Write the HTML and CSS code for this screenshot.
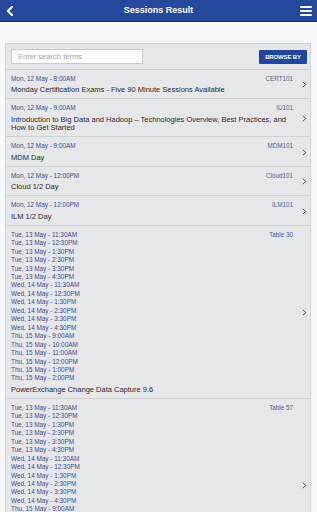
FILE: index.html
```html
<!DOCTYPE html>
<html lang="en">
<head>
<meta charset="utf-8">
<title>Sessions Result</title>
<link rel="stylesheet" href="styles.css">
</head>
<body>
<header class="topbar">
  <button class="icon-btn back" aria-label="Back">
    <svg width="8" height="10" viewBox="0 0 8 10"><polyline points="6,1 1.8,5 6,9" fill="none" stroke="#fff" stroke-width="2" stroke-linecap="round" stroke-linejoin="round"/></svg>
  </button>
  <h1 class="topbar-title">Sessions Result</h1>
  <button class="icon-btn menu" aria-label="Menu">
    <svg width="12" height="10" viewBox="0 0 12 10"><rect x="0" y="0" width="12" height="2" rx="1" fill="#fff"/><rect x="0" y="4" width="12" height="2" rx="1" fill="#fff"/><rect x="0" y="8" width="12" height="2" rx="1" fill="#fff"/></svg>
  </button>
</header>
<main class="page">
  <section class="panel">
    <div class="searchbar">
      <input class="search" type="text" placeholder="Enter search terms">
      <button class="browse">BROWSE BY</button>
    </div>
    <ul class="sessions">
      <li class="session">
        <div class="info">
          <div class="meta"><div class="dates"><div>Mon, 12 May - 8:00AM</div></div><span class="code">CERT101</span></div>
          <div class="title">Monday Certification Exams - Five 90 Minute Sessions Available</div>
        </div>
        <svg class="chev" width="5" height="7" viewBox="0 0 5 7"><polyline points="0.8,0.8 3.8,3.5 0.8,6.2" fill="none" stroke="#555" stroke-width="1"/></svg>
      </li>
      <li class="session">
        <div class="info">
          <div class="meta"><div class="dates"><div>Mon, 12 May - 9:00AM</div></div><span class="code">IU101</span></div>
          <div class="title">Introduction to Big Data and Hadoop – Technologies Overview, Best Practices, and How to Get Started</div>
        </div>
        <svg class="chev" width="5" height="7" viewBox="0 0 5 7"><polyline points="0.8,0.8 3.8,3.5 0.8,6.2" fill="none" stroke="#555" stroke-width="1"/></svg>
      </li>
      <li class="session">
        <div class="info">
          <div class="meta"><div class="dates"><div>Mon, 12 May - 9:00AM</div></div><span class="code">MDM101</span></div>
          <div class="title">MDM Day</div>
        </div>
        <svg class="chev" width="5" height="7" viewBox="0 0 5 7"><polyline points="0.8,0.8 3.8,3.5 0.8,6.2" fill="none" stroke="#555" stroke-width="1"/></svg>
      </li>
      <li class="session">
        <div class="info">
          <div class="meta"><div class="dates"><div>Mon, 12 May - 12:00PM</div></div><span class="code">Cloud101</span></div>
          <div class="title">Cloud 1/2 Day</div>
        </div>
        <svg class="chev" width="5" height="7" viewBox="0 0 5 7"><polyline points="0.8,0.8 3.8,3.5 0.8,6.2" fill="none" stroke="#555" stroke-width="1"/></svg>
      </li>
      <li class="session">
        <div class="info">
          <div class="meta"><div class="dates"><div>Mon, 12 May - 12:00PM</div></div><span class="code">ILM101</span></div>
          <div class="title">ILM 1/2 Day</div>
        </div>
        <svg class="chev" width="5" height="7" viewBox="0 0 5 7"><polyline points="0.8,0.8 3.8,3.5 0.8,6.2" fill="none" stroke="#555" stroke-width="1"/></svg>
      </li>
      <li class="session">
        <div class="info">
          <div class="meta">
            <div class="dates">
              <div>Tue, 13 May - 11:30AM</div>
              <div>Tue, 13 May - 12:30PM</div>
              <div>Tue, 13 May - 1:30PM</div>
              <div>Tue, 13 May - 2:30PM</div>
              <div>Tue, 13 May - 3:30PM</div>
              <div>Tue, 13 May - 4:30PM</div>
              <div>Wed, 14 May - 11:30AM</div>
              <div>Wed, 14 May - 12:30PM</div>
              <div>Wed, 14 May - 1:30PM</div>
              <div>Wed, 14 May - 2:30PM</div>
              <div>Wed, 14 May - 3:30PM</div>
              <div>Wed, 14 May - 4:30PM</div>
              <div>Thu, 15 May - 9:00AM</div>
              <div>Thu, 15 May - 10:00AM</div>
              <div>Thu, 15 May - 11:00AM</div>
              <div>Thu, 15 May - 12:00PM</div>
              <div>Thu, 15 May - 1:00PM</div>
              <div>Thu, 15 May - 2:00PM</div>
            </div>
            <span class="code table">Table 30</span>
          </div>
          <div class="title">PowerExchange Change Data Capture 9.6</div>
        </div>
        <svg class="chev" width="5" height="7" viewBox="0 0 5 7"><polyline points="0.8,0.8 3.8,3.5 0.8,6.2" fill="none" stroke="#555" stroke-width="1"/></svg>
      </li>
      <li class="session">
        <div class="info">
          <div class="meta">
            <div class="dates">
              <div>Tue, 13 May - 11:30AM</div>
              <div>Tue, 13 May - 12:30PM</div>
              <div>Tue, 13 May - 1:30PM</div>
              <div>Tue, 13 May - 2:30PM</div>
              <div>Tue, 13 May - 3:30PM</div>
              <div>Tue, 13 May - 4:30PM</div>
              <div>Wed, 14 May - 11:30AM</div>
              <div>Wed, 14 May - 12:30PM</div>
              <div>Wed, 14 May - 1:30PM</div>
              <div>Wed, 14 May - 2:30PM</div>
              <div>Wed, 14 May - 3:30PM</div>
              <div>Wed, 14 May - 4:30PM</div>
              <div>Thu, 15 May - 9:00AM</div>
              <div>Thu, 15 May - 10:00AM</div>
              <div>Thu, 15 May - 11:00AM</div>
              <div>Thu, 15 May - 12:00PM</div>
              <div>Thu, 15 May - 1:00PM</div>
              <div>Thu, 15 May - 2:00PM</div>
            </div>
            <span class="code table">Table 57</span>
          </div>
          <div class="title">PowerCenter Data Validation Option</div>
        </div>
        <svg class="chev" width="5" height="7" viewBox="0 0 5 7"><polyline points="0.8,0.8 3.8,3.5 0.8,6.2" fill="none" stroke="#555" stroke-width="1"/></svg>
      </li>
    </ul>
  </section>
</main>
</body>
</html>
```
FILE: styles.css
```css
* { box-sizing: border-box; }

html, body {
  margin: 0;
  padding: 0;
}

body {
  background: #f7f8fa;
  font-family: "Liberation Sans", Arial, Helvetica, sans-serif;
  color: #2b2b2b;
  overflow: hidden;
}

.topbar {
  display: grid;
  grid-template-columns: 1fr auto 1fr;
  align-items: center;
  height: 22px;
  background: #26489c;
  border-bottom: 1px solid #1a3478;
}

.icon-btn {
  background: none;
  border: 0;
  padding: 0;
  margin: 0;
  display: flex;
  line-height: 0;
}

.back {
  justify-self: start;
  margin-left: 6px;
}

.menu {
  justify-self: end;
  margin-right: 5px;
}

.topbar-title {
  margin: 0;
  font-size: 9px;
  font-weight: bold;
  color: #fff;
  line-height: 21px;
}

.page {
  padding: 21px 6px 0 5px;
}

.panel {
  background: #e6e7e9;
  border: 1px solid #d3d4d6;
  border-bottom: 0;
}

.searchbar {
  display: flex;
  justify-content: space-between;
  align-items: center;
  padding: 5px 3px 5px 5px;
  border-bottom: 1px solid #d0d1d3;
}

.search {
  width: 132px;
  height: 15px;
  margin: 0;
  padding: 0 0 0 6px;
  border: 1px solid #cbcbcb;
  background: #fff;
  font-family: inherit;
  font-size: 7.6px;
  color: #333;
  outline: none;
  border-radius: 0;
}

.search::placeholder {
  color: #a3a3a3;
}

.browse {
  width: 48px;
  height: 14px;
  margin: 0;
  padding: 0;
  border: 0;
  background: #22469b;
  color: #fff;
  font-family: inherit;
  font-size: 6px;
  font-weight: bold;
  letter-spacing: -0.15px;
  border-radius: 1px;
}

.sessions {
  list-style: none;
  margin: 0;
  padding: 0;
}

.session {
  display: flex;
  align-items: center;
  padding: 5px 3px 3.5px 5px;
  border-bottom: 1px solid #d0d1d3;
}

.info {
  flex: 1;
  min-width: 0;
}

.meta {
  display: flex;
  justify-content: space-between;
  align-items: flex-start;
  padding-right: 2px;
}

.dates {
  font-size: 6.4px;
  line-height: 8.45px;
  color: #3c4d8e;
}

.code {
  font-size: 6.3px;
  line-height: 8.45px;
  color: #56628f;
}

.code.table {
  color: #4558a8;
}

.title {
  margin-top: 3px;
  font-size: 7.5px;
  line-height: 8.5px;
  color: #2b2b2b;
}

.chev {
  flex: none;
  margin-left: 7px;
}
```
